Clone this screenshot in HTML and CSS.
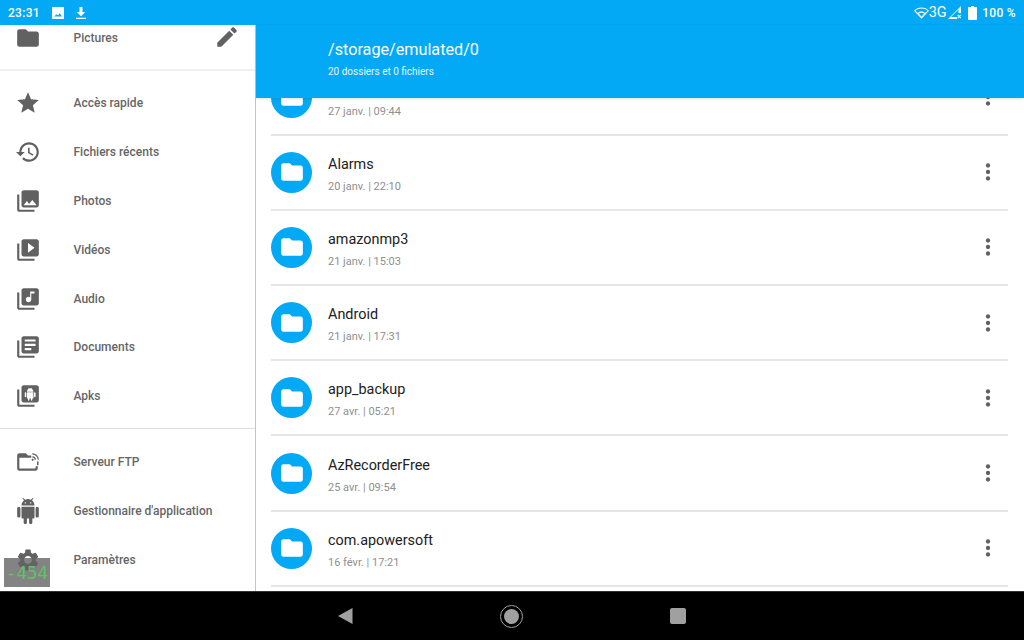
FILE: index.html
```html
<!DOCTYPE html>
<html lang="en">
<head>
  <meta charset="UTF-8">
  <meta name="viewport" content="width=device-width, initial-scale=1.0">
  <title>Fichiers</title>
  <link rel="stylesheet" href="styles.css">
</head>
<body>
  <!-- Icon set -->
  <svg class="icon-defs" aria-hidden="true">
    <symbol id="i-folder" viewBox="0 0 24 24"><path d="M10 4H4c-1.1 0-1.99.9-1.99 2L2 18c0 1.1.9 2 2 2h16c1.1 0 2-.9 2-2V8c0-1.1-.9-2-2-2h-8l-2-2z"/></symbol>
    <symbol id="i-edit" viewBox="0 0 24 24"><path d="M3 17.25V21h3.75L17.81 9.94l-3.75-3.75L3 17.25zM20.71 7.04c.39-.39.39-1.02 0-1.41l-2.34-2.34c-.39-.39-1.02-.39-1.41 0l-1.83 1.83 3.75 3.75 1.83-1.83z"/></symbol>
    <symbol id="i-star" viewBox="0 0 24 24"><path d="M12 17.27L18.18 21l-1.64-7.03L22 9.24l-7.19-.61L12 2 9.19 8.63 2 9.24l5.46 4.73L5.82 21z"/></symbol>
    <symbol id="i-history" viewBox="0 0 24 24"><path d="M13 3c-4.97 0-9 4.03-9 9H1l3.89 3.89.07.14L9 12H6c0-3.87 3.13-7 7-7s7 3.13 7 7-3.13 7-7 7c-1.93 0-3.68-.79-4.94-2.06l-1.42 1.42C8.27 19.99 10.51 21 13 21c4.97 0 9-4.03 9-9s-4.03-9-9-9zm-1 5v5l4.28 2.54.72-1.21-3.5-2.08V8H12z"/></symbol>
    <symbol id="i-photos" viewBox="0 0 24 24"><path d="M22 16V4c0-1.1-.9-2-2-2H8c-1.1 0-2 .9-2 2v12c0 1.1.9 2 2 2h12c1.1 0 2-.9 2-2zm-11-4l2.03 2.71L16 11l4 5H8l3-4zM2 6v14c0 1.1.9 2 2 2h14v-2H4V6H2z"/></symbol>
    <symbol id="i-videos" viewBox="0 0 24 24"><path d="M4 6H2v14c0 1.1.9 2 2 2h14v-2H4V6zm16-4H8c-1.1 0-2 .9-2 2v12c0 1.1.9 2 2 2h12c1.1 0 2-.9 2-2V4c0-1.1-.9-2-2-2zm-8 12.5v-9l6 4.5-6 4.5z"/></symbol>
    <symbol id="i-audio" viewBox="0 0 24 24"><path d="M20 2H8c-1.1 0-2 .9-2 2v12c0 1.1.9 2 2 2h12c1.1 0 2-.9 2-2V4c0-1.1-.9-2-2-2zm-2 5h-3v5.5c0 1.38-1.12 2.5-2.5 2.5S10 13.88 10 12.5s1.12-2.5 2.5-2.5c.57 0 1.08.19 1.5.51V5h4v2zM4 6H2v14c0 1.1.9 2 2 2h14v-2H4V6z"/></symbol>
    <symbol id="i-docs" viewBox="0 0 24 24"><path d="M4 6H2v14c0 1.1.9 2 2 2h14v-2H4V6zm16-4H8c-1.1 0-2 .9-2 2v12c0 1.1.9 2 2 2h12c1.1 0 2-.9 2-2V4c0-1.1-.9-2-2-2zm-1 9H9V9h10v2zm-4 4H9v-2h6v2zm4-8H9V5h10v2z"/></symbol>
    <symbol id="i-apks" viewBox="0 0 24 24">
      <path d="M4 6H2v14c0 1.1.9 2 2 2h14v-2H4V6zm16-4H8c-1.1 0-2 .9-2 2v12c0 1.1.9 2 2 2h12c1.1 0 2-.9 2-2V4c0-1.1-.9-2-2-2z"/>
      <path fill="#fff" d="M11 8.5h6v5.2c0 .3-.2.5-.5.5H16v1.6c0 .9-1.300.9-1.300 0v-1.600h-1.400v1.600c0 .9-1.300.9-1.300 0v-1.600h-.5c-.3 0-.5-.2-.5-.5zM9.700 8.500c.4 0 .7.3.7.7v3.200c0 .9-1.400.9-1.400 0V9.200c0-.4.3-.7.7-.7zm8.600 0c.4 0 .7.3.7.7v3.200c0 .9-1.400.9-1.400 0V9.200c0-.4.3-.7.7-.7zM11 8c0-1.200.7-2.200 1.700-2.700l-.6-.8.3-.2.7.8c.6-.2 1.200-.2 1.800 0l.7-.8.3.2-.6.8C16.300 5.800 17 6.800 17 8z"/>
    </symbol>
    <symbol id="i-ftp" viewBox="0 0 24 24">
      <path fill-rule="evenodd" d="M4 4h6l2 2h3v2H4v10h15v-2h2v2c0 1.100-.9 2-2 2H4c-1.100 0-2-.9-2-2V6c0-1.100.9-2 2-2z"/>
      <path fill="none" stroke="currentColor" stroke-width="1.200" d="M16 4.500c3.100 0 5.500 2.400 5.500 5.500M16 7.300c1.500 0 2.700 1.200 2.700 2.700"/>
      <circle cx="16.300" cy="10" r="1"/>
      <rect x="20.300" y="11.500" width="1.400" height="3.500"/>
    </symbol>
    <symbol id="i-android" viewBox="0 0 24 24"><path d="M6 18c0 .55.45 1 1 1h1v3.500c0 .83.67 1.500 1.500 1.500s1.500-.67 1.500-1.500V19h2v3.500c0 .83.67 1.500 1.500 1.500s1.500-.67 1.500-1.500V19h1c.55 0 1-.45 1-1V8H6v10zM3.500 8C2.670 8 2 8.670 2 9.500v7c0 .83.67 1.500 1.500 1.500S5 17.330 5 16.500v-7C5 8.670 4.330 8 3.500 8zm17 0c-.83 0-1.500.67-1.500 1.500v7c0 .83.67 1.500 1.500 1.500s1.500-.67 1.500-1.500v-7c0-.83-.67-1.500-1.500-1.500zm-4.970-5.840l1.300-1.300c.2-.2.2-.51 0-.71-.2-.2-.51-.2-.71 0l-1.480 1.480C13.850 1.230 12.950 1 12 1c-.96 0-1.860.23-2.660.63L7.850.15c-.2-.2-.51-.2-.71 0-.2.2-.2.51 0 .71l1.310 1.310C6.970 3.260 6 5.010 6 7h12c0-1.990-.97-3.750-2.470-4.840zM10 5H9V4h1v1zm5 0h-1V4h1v1z"/></symbol>
    <symbol id="i-settings" viewBox="0 0 24 24"><path d="M19.140 12.940c.04-.3.06-.61.06-.94 0-.32-.02-.64-.07-.94l2.030-1.580c.18-.14.23-.41.12-.61l-1.920-3.320c-.12-.22-.37-.29-.59-.22l-2.390.96c-.5-.38-1.030-.7-1.620-.94l-.36-2.540c-.04-.24-.24-.41-.48-.41h-3.840c-.24 0-.43.17-.47.41l-.36 2.540c-.59.24-1.130.57-1.620.94l-2.390-.96c-.22-.08-.47 0-.59.22L2.740 8.870c-.12.21-.08.47.12.61l2.030 1.580c-.05.3-.09.63-.09.94s.02.64.07.94l-2.030 1.580c-.18.14-.23.41-.12.61l1.920 3.320c.12.22.37.29.59.22l2.390-.96c.5.38 1.030.7 1.620.94l.36 2.540c.05.24.24.41.48.41h3.840c.24 0 .44-.17.47-.41l.36-2.540c.59-.24 1.130-.56 1.620-.94l2.390.96c.22.08.47 0 .59-.22l1.920-3.320c.12-.22.07-.47-.12-.61l-2.010-1.580zM12 15.600c-1.980 0-3.600-1.620-3.600-3.600s1.620-3.600 3.600-3.600 3.600 1.620 3.600 3.600-1.620 3.600-3.600 3.600z"/></symbol>
    <symbol id="i-more" viewBox="0 0 24 24"><circle cx="12" cy="6" r="2"/><circle cx="12" cy="12" r="2"/><circle cx="12" cy="18" r="2"/></symbol>
  </svg>

  <!-- Status bar -->
  <header class="status-bar">
    <div class="status-left">
      <span class="status-time">23:31</span>
      <svg class="status-icon" viewBox="0 0 14 14"><path fill-rule="evenodd" d="M1.500 1h11c.3 0 .5.2.5.5v11c0 .3-.2.5-.5.5h-11c-.3 0-.5-.2-.5-.5v-11c0-.3.200-.5.500-.5zM3 10.500h8L8.800 7.300 7 9.500 5.700 8.200z"/></svg>
      <svg class="status-icon" viewBox="0 0 14 14"><path d="M5.500 1h3v5h2.700L7 10.300 2.800 6h2.700zM2 11.800h10v1.300H2z"/></svg>
    </div>
    <div class="status-right">
      <svg class="status-wifi" viewBox="0 0 16 12"><path fill-rule="evenodd" d="M8 12L0 3.500C2 1.300 4.900 0 8 0s6 1.300 8 3.500zM8 9.800l2.900-3.100C10.100 6 9.100 5.600 8 5.600S5.900 6 5.100 6.700zM4.300 5.900C5.300 5 6.600 4.500 8 4.500s2.700.5 3.700 1.400l2.900-2.400C12.900 2 10.500 1.100 8 1.100S3.100 2 1.400 3.500z"/></svg>
      <span class="status-net">3G</span>
      <svg class="status-signal" viewBox="0 0 14 13"><path d="M13 0v7h-2.500V3.500L3 11h6v2H0zM10 8.500l1.300 1.300 1.300-1.300.7.700-1.300 1.300 1.300 1.300-.7.700-1.300-1.300-1.300 1.300-.7-.7 1.300-1.300-1.300-1.300z"/></svg>
      <svg class="status-battery" viewBox="0 0 9 14"><path d="M3 0h3v1h2c.5 0 1 .4 1 1v11c0 .6-.5 1-1 1H1c-.5 0-1-.4-1-1V2c0-.6.5-1 1-1h2z"/></svg>
      <span class="status-level">100 %</span>
    </div>
  </header>

  <div class="app">
    <!-- Drawer -->
    <aside class="drawer">
      <div class="drawer-head">
        <svg class="drawer-icon"><use href="#i-folder"/></svg>
        <span class="drawer-label">Pictures</span>
        <svg class="drawer-edit"><use href="#i-edit"/></svg>
      </div>
      <nav class="drawer-group">
        <div class="drawer-item"><svg class="drawer-icon"><use href="#i-star"/></svg><span class="drawer-label">Accès rapide</span></div>
        <div class="drawer-item"><svg class="drawer-icon"><use href="#i-history"/></svg><span class="drawer-label">Fichiers récents</span></div>
        <div class="drawer-item"><svg class="drawer-icon"><use href="#i-photos"/></svg><span class="drawer-label">Photos</span></div>
        <div class="drawer-item"><svg class="drawer-icon"><use href="#i-videos"/></svg><span class="drawer-label">Vidéos</span></div>
        <div class="drawer-item"><svg class="drawer-icon"><use href="#i-audio"/></svg><span class="drawer-label">Audio</span></div>
        <div class="drawer-item"><svg class="drawer-icon"><use href="#i-docs"/></svg><span class="drawer-label">Documents</span></div>
        <div class="drawer-item"><svg class="drawer-icon"><use href="#i-apks"/></svg><span class="drawer-label">Apks</span></div>
      </nav>
      <nav class="drawer-group drawer-group-last">
        <div class="drawer-item"><svg class="drawer-icon"><use href="#i-ftp"/></svg><span class="drawer-label">Serveur FTP</span></div>
        <div class="drawer-item"><svg class="drawer-icon"><use href="#i-android"/></svg><span class="drawer-label">Gestionnaire d'application</span></div>
        <div class="drawer-item"><svg class="drawer-icon"><use href="#i-settings"/></svg><span class="drawer-label">Paramètres</span></div>
      </nav>
      <div class="scroll-debug">-454</div>
    </aside>

    <!-- File list -->
    <main class="browser">
      <div class="path-bar">
        <h1 class="path-title">/storage/emulated/0</h1>
        <p class="path-count">20 dossiers et 0 fichiers</p>
      </div>
      <div class="file-scroll">
        <ul class="file-list">
          <li class="file-row">
            <span class="file-badge"><svg class="file-folder"><use href="#i-folder"/></svg></span>
            <div class="file-info"><div class="file-name">&nbsp;</div><div class="file-date">27 janv. | 09:44</div></div>
            <svg class="file-more"><use href="#i-more"/></svg>
          </li>
          <li class="file-row">
            <span class="file-badge"><svg class="file-folder"><use href="#i-folder"/></svg></span>
            <div class="file-info"><div class="file-name">Alarms</div><div class="file-date">20 janv. | 22:10</div></div>
            <svg class="file-more"><use href="#i-more"/></svg>
          </li>
          <li class="file-row">
            <span class="file-badge"><svg class="file-folder"><use href="#i-folder"/></svg></span>
            <div class="file-info"><div class="file-name">amazonmp3</div><div class="file-date">21 janv. | 15:03</div></div>
            <svg class="file-more"><use href="#i-more"/></svg>
          </li>
          <li class="file-row">
            <span class="file-badge"><svg class="file-folder"><use href="#i-folder"/></svg></span>
            <div class="file-info"><div class="file-name">Android</div><div class="file-date">21 janv. | 17:31</div></div>
            <svg class="file-more"><use href="#i-more"/></svg>
          </li>
          <li class="file-row">
            <span class="file-badge"><svg class="file-folder"><use href="#i-folder"/></svg></span>
            <div class="file-info"><div class="file-name">app_backup</div><div class="file-date">27 avr. | 05:21</div></div>
            <svg class="file-more"><use href="#i-more"/></svg>
          </li>
          <li class="file-row">
            <span class="file-badge"><svg class="file-folder"><use href="#i-folder"/></svg></span>
            <div class="file-info"><div class="file-name">AzRecorderFree</div><div class="file-date">25 avr. | 09:54</div></div>
            <svg class="file-more"><use href="#i-more"/></svg>
          </li>
          <li class="file-row">
            <span class="file-badge"><svg class="file-folder"><use href="#i-folder"/></svg></span>
            <div class="file-info"><div class="file-name">com.apowersoft</div><div class="file-date">16 févr. | 17:21</div></div>
            <svg class="file-more"><use href="#i-more"/></svg>
          </li>
        </ul>
      </div>
    </main>
  </div>

  <!-- Navigation bar -->
  <footer class="nav-bar">
    <svg class="nav-back" viewBox="0 0 15 16"><path d="M14.500 0v16L0 8z"/></svg>
    <span class="nav-home"><span class="nav-home-dot"></span></span>
    <span class="nav-recent"></span>
  </footer>
</body>
</html>
```

FILE: styles.css
```css
/* Basic Reset */
* {
  margin: 0;
  padding: 0;
  box-sizing: border-box;
}

html, body {
  width: 1024px;
  height: 640px;
  overflow: hidden;
}

body {
  display: flex;
  flex-direction: column;
  font-family: Roboto, "Liberation Sans", sans-serif;
  background-color: #fff;
  color: #212121;
}

.icon-defs {
  display: none;
}

/* Status bar */
.status-bar {
  flex: 0 0 25px;
  display: flex;
  align-items: center;
  justify-content: space-between;
  padding: 0 8px;
  background-color: #03a9f4;
  color: #fff;
  font-size: 12px;
  font-weight: 500;
}

.status-left,
.status-right {
  display: flex;
  align-items: center;
}

.status-time {
  letter-spacing: 0.3px;
  margin-right: 11px;
}

.status-icon {
  width: 14px;
  height: 14px;
  margin-right: 9px;
  fill: #fff;
}

.status-wifi {
  width: 15px;
  height: 12px;
  fill: #fff;
}

.status-net {
  font-size: 14.500px;
  font-weight: 400;
  margin-right: 1.500px;
}

.status-signal {
  width: 14px;
  height: 13px;
  fill: #fff;
}

.status-battery {
  width: 9px;
  height: 14px;
  margin-left: 6px;
  fill: #fff;
}

.status-level {
  margin-left: 5px;
  letter-spacing: 0.3px;
}

/* Main area */
.app {
  flex: 1;
  display: flex;
  min-height: 0;
}

/* Drawer */
.drawer {
  position: relative;
  flex: 0 0 256px;
  display: flex;
  flex-direction: column;
  border-right: 1px solid #c4c4c4;
  overflow: hidden;
  background-color: #fff;
}

.drawer-head {
  flex: 0 0 46px;
  display: flex;
  align-items: flex-start;
  padding-left: 15px;
  border-bottom: 2px solid #f0f0f0;
}

.drawer-head .drawer-label {
  margin-top: 6px;
  flex: 1;
}

.drawer-edit {
  width: 26px;
  height: 26px;
  margin: -1px 15px 0 0;
  fill: #616161;
}

.drawer-group {
  padding: 8px 0 7px;
  border-bottom: 1px solid #e0e0e0;
}

.drawer-group-last {
  padding-top: 9px;
  border-bottom: 0;
}

.drawer-item {
  display: flex;
  align-items: center;
  height: 48.800px;
  padding-left: 15px;
}

.drawer-icon {
  flex: 0 0 26px;
  width: 26px;
  height: 26px;
  fill: #616161;
  color: #616161;
  margin-right: 32.500px;
}

.drawer-label {
  font-size: 12px;
  font-weight: 500;
  color: #666;
}

.scroll-debug {
  position: absolute;
  left: 4px;
  bottom: 4px;
  width: 46px;
  height: 29px;
  background-color: rgba(100, 100, 100, 0.8);
  color: #5cc465;
  font-family: "DejaVu Sans Mono", monospace;
  font-size: 17.500px;
  line-height: 31px;
  text-align: center;
}

/* File browser */
.browser {
  flex: 1;
  display: flex;
  flex-direction: column;
  min-width: 0;
}

.path-bar {
  position: relative;
  z-index: 1;
  flex: 0 0 73px;
  padding: 15px 0 0 72px;
  background-color: #03a9f4;
  color: #fff;
  box-shadow: 0 1px 3px rgba(0, 0, 0, 0.12);
}

.path-title {
  font-size: 16.200px;
  font-weight: 400;
  line-height: 20px;
}

.path-count {
  margin-top: 5px;
  font-size: 10px;
  line-height: 14px;
  color: #e3f5fe;
}

.file-scroll {
  flex: 1;
  min-height: 0;
  overflow: hidden;
}

.file-list {
  list-style: none;
  margin: -37.500px 16px 0 15px;
}

.file-row {
  display: flex;
  align-items: center;
  height: 75.200px;
  border-bottom: 2px solid #e6e6e6;
}

.file-badge {
  flex: 0 0 41px;
  width: 41px;
  height: 41px;
  display: flex;
  align-items: center;
  justify-content: center;
  border-radius: 50%;
  background-color: #03a9f4;
}

.file-folder {
  width: 26px;
  height: 26px;
  fill: #fff;
}

.file-info {
  flex: 1;
  margin-left: 16px;
  padding-top: 4px;
}

.file-name {
  font-size: 14.400px;
  line-height: 20px;
  color: #212121;
}

.file-date {
  margin-top: 5px;
  font-size: 11px;
  line-height: 14px;
  color: #8f8f8f;
}

.file-more {
  width: 26px;
  height: 26px;
  margin-right: 7.500px;
  fill: #616161;
}

/* Navigation bar */
.nav-bar {
  flex: 0 0 49px;
  display: flex;
  align-items: center;
  justify-content: center;
  gap: 147px;
  background-color: #000;
  border-top: 1px solid #333;
}

.nav-back {
  width: 15px;
  height: 16px;
  fill: #a0a0a0;
}

.nav-home {
  width: 23px;
  height: 23px;
  display: flex;
  align-items: center;
  justify-content: center;
  border: 1px solid #a0a0a0;
  border-radius: 50%;
}

.nav-home-dot {
  width: 15px;
  height: 15px;
  border-radius: 50%;
  background-color: #a0a0a0;
}

.nav-recent {
  width: 16px;
  height: 16px;
  border-radius: 2px;
  background-color: #a0a0a0;
}
```
